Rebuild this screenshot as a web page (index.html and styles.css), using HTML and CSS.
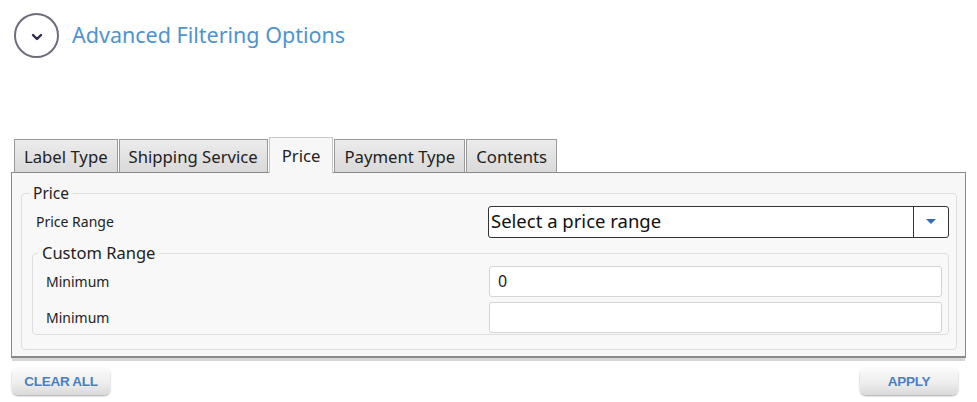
FILE: index.html
```html
<!DOCTYPE html>
<html>
<head>
<meta charset="utf-8">
<link rel="stylesheet" href="styles.css">
</head>
<body>
<div class="page">
  <header class="header">
    <span class="toggle">
      <svg width="12" height="8" viewBox="0 0 12 8"><path d="M2 2 L6 6 L10 2" fill="none" stroke="#2b2a4c" stroke-width="2.4" stroke-linecap="round" stroke-linejoin="round"/></svg>
    </span>
    <h1 class="title">Advanced Filtering Options</h1>
  </header>

  <div class="tabs">
    <div class="tab">Label Type</div>
    <div class="tab">Shipping Service</div>
    <div class="tab active">Price</div>
    <div class="tab">Payment Type</div>
    <div class="tab">Contents</div>
  </div>

  <div class="panel">
    <fieldset class="group outer">
      <legend>Price</legend>
      <div class="row range-row">
        <span class="label">Price Range</span>
        <div class="combo">
          <span class="combo-text">Select a price range</span>
          <span class="combo-btn"><svg width="10" height="6" viewBox="0 0 10 6"><path d="M0 0 H10 L5 5 Z" fill="#2f6fb5"/></svg></span>
        </div>
      </div>
      <fieldset class="group inner">
        <legend>Custom Range</legend>
        <div class="row field-row">
          <span class="label">Minimum</span>
          <div class="input">0</div>
        </div>
        <div class="row field-row">
          <span class="label">Minimum</span>
          <div class="input"></div>
        </div>
      </fieldset>
    </fieldset>
  </div>

  <div class="actions">
    <button class="btn">CLEAR ALL</button>
    <button class="btn">APPLY</button>
  </div>
</div>
</body>
</html>
```
FILE: styles.css
```css
* { box-sizing: border-box; }
html, body { margin: 0; padding: 0; background: #ffffff; }
body { font-family: "Noto Sans", "Open Sans", sans-serif; color: #222; }

.page { width: 977px; height: 402px; overflow: hidden; }

.header {
  display: flex;
  align-items: center;
  gap: 13px;
  padding: 13px 0 0 14px;
  height: 58px;
}
.toggle {
  width: 45px; height: 45px;
  border: 2px solid #6f6c7c;
  border-radius: 50%;
  display: flex; align-items: center; justify-content: center;
  flex: none;
}
.toggle svg { margin-top: 2px; }
.title {
  margin: 0;
  font-weight: 400;
  font-size: 21.5px;
  color: #4f93d1;
  margin-top: -2px;
}

.tabs {
  display: flex;
  align-items: flex-end;
  gap: 1px;
  margin: 79px 0 0 14px;
  height: 35px;
  position: relative;
  z-index: 2;
}
.tab {
  height: 33px;
  padding: 0 9px;
  border: 1px solid #9a9a9a;
  border-bottom: none;
  background: linear-gradient(#ececec, #d9d9d9);
  font-size: 16.7px;
  line-height: 33px;
  color: #222;
  white-space: nowrap;
}
.tab.active {
  height: 36px;
  background: #f7f7f7;
  border-color: #c8c8c8;
  margin-bottom: -1px;
  padding: 0 12px;
  line-height: 35px;
}

.panel {
  margin: 0 11px 0 11px;
  height: 186px;
  border: 1px solid #8a8a8a;
  border-bottom: 2px solid #8a8a8a;
  box-shadow: 0 4px 0 -1px #d6d6d6;
  background: #f7f7f7;
  padding: 11px 8px 0 9px;
  position: relative;
  z-index: 1;
}

.group {
  margin: 0;
  border: 1px solid #dedede;
  border-radius: 4px;
  background: #f8f8f8;
}
.group legend {
  padding: 0 3px;
  margin-left: -6px;
  font-size: 15.5px;
  color: #222;
  line-height: 18px;
}
.outer { height: 166px; padding: 0 7px 0 14px; }
.inner { height: 91px; margin: 6px 0 0 -4px; padding: 0 6px 0 13px; }
.inner legend { font-size: 16.5px; margin-left: -8px; padding: 0 4px; }

.row { display: flex; align-items: center; justify-content: space-between; }
.label { font-size: 14px; color: #222; }
.range-row { height: 33px; margin-top: 3px; }
.combo {
  width: 461px; height: 32px;
  border: 1.5px solid #333;
  border-radius: 3px;
  background: #fff;
  display: flex;
  align-items: stretch;
}
.combo-text { flex: 1; font-size: 18.5px; padding-left: 2px; line-height: 28px; color: #111; }
.combo-btn {
  width: 35px;
  border-left: 1.5px solid #333;
  display: flex; align-items: center; justify-content: center;
}

.field-row { height: 36px; }
.field-row:first-of-type { margin-top: 1px; }
.input {
  width: 453px; height: 31px;
  border: 1px solid #d4d4d4;
  border-radius: 3px;
  background: #fff;
  font-size: 16px;
  line-height: 29px;
  padding-left: 8px;
  color: #222;
}

.actions {
  display: flex;
  justify-content: space-between;
  padding: 10px 19px 0 12px;
}
.btn {
  width: 98px; height: 27px;
  border: none;
  border-radius: 6px;
  background: linear-gradient(#fafafa 0%, #eeeeee 55%, #d9d9d9 100%);
  box-shadow: 0 1px 2px rgba(0,0,0,0.35);
  font-family: "Liberation Sans", Arial, sans-serif;
  font-weight: bold;
  font-size: 13.5px;
  color: #4a7fc0;
  letter-spacing: -0.3px;
  padding: 0;
}
```
